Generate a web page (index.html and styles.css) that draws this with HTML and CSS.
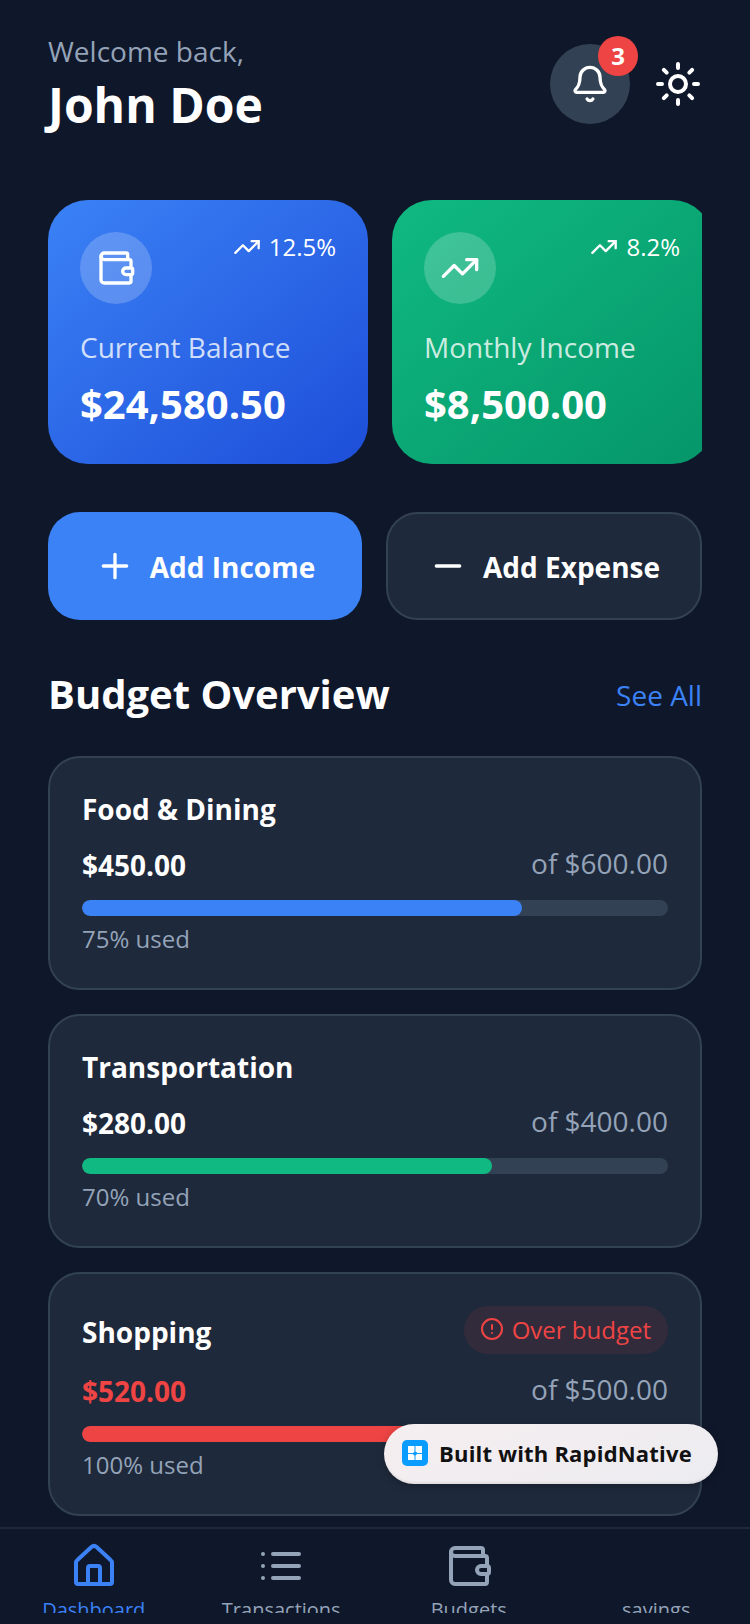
FILE: index.html
```html
<!DOCTYPE html>
<html lang="en">
<head>
    <meta charset="UTF-8">
    <meta name="viewport" content="width=device-width, initial-scale=1.0">
    <title>Dashboard</title>
    <link rel="stylesheet" href="styles.css">
</head>
<body>
    <div class="app">
        <div class="content">
            <div class="header">
                <div>
                    <div class="welcome">Welcome back,</div>
                    <div class="name">John Doe</div>
                </div>
                <div class="header-actions">
                    <div class="bell">
                        <svg class="icon-40" viewBox="0 0 24 24"><path d="M10.268 21a2 2 0 0 0 3.464 0"/><path d="M3.262 15.326A1 1 0 0 0 4 17h16a1 1 0 0 0 .74-1.673C19.41 13.956 18 12.499 18 8A6 6 0 0 0 6 8c0 4.499-1.411 5.956-2.738 7.326"/></svg>
                        <span class="bell-count">3</span>
                    </div>
                    <svg class="icon-48" viewBox="0 0 24 24"><circle cx="12" cy="12" r="4"/><path d="M12 2v2M12 20v2M4.93 4.93l1.41 1.41M17.66 17.66l1.41 1.41M2 12h2M20 12h2M6.34 17.66l-1.41 1.41M19.07 4.93l-1.41 1.41"/></svg>
                </div>
            </div>

            <div class="cards">
                <div class="summary-card blue">
                    <div class="summary-top">
                        <div class="summary-icon">
                            <svg class="icon-40" viewBox="0 0 24 24"><path d="M19 7V4a1 1 0 0 0-1-1H5a2 2 0 0 0 0 4h15a1 1 0 0 1 1 1v4h-3a2 2 0 0 0 0 4h3a1 1 0 0 0 1-1v-2a1 1 0 0 0-1-1"/><path d="M3 5v14a2 2 0 0 0 2 2h15a1 1 0 0 0 1-1v-4"/></svg>
                        </div>
                        <div class="trend">
                            <svg class="icon-28" viewBox="0 0 24 24"><path d="M22 7l-8.5 8.5-5-5L2 17"/><path d="M16 7h6v6"/></svg>
                            <span>12.5%</span>
                        </div>
                    </div>
                    <div class="summary-label">Current Balance</div>
                    <div class="summary-value">$24,580.50</div>
                </div>
                <div class="summary-card green">
                    <div class="summary-top">
                        <div class="summary-icon">
                            <svg class="icon-40" viewBox="0 0 24 24"><path d="M22 7l-8.5 8.5-5-5L2 17"/><path d="M16 7h6v6"/></svg>
                        </div>
                        <div class="trend">
                            <svg class="icon-28" viewBox="0 0 24 24"><path d="M22 7l-8.5 8.5-5-5L2 17"/><path d="M16 7h6v6"/></svg>
                            <span>8.2%</span>
                        </div>
                    </div>
                    <div class="summary-label">Monthly Income</div>
                    <div class="summary-value">$8,500.00</div>
                </div>
            </div>

            <div class="actions">
                <div class="action primary">
                    <svg class="icon-40" viewBox="0 0 24 24"><path d="M5 12h14M12 5v14"/></svg>
                    <span class="action-text">Add Income</span>
                </div>
                <div class="action secondary">
                    <svg class="icon-40" viewBox="0 0 24 24"><path d="M5 12h14"/></svg>
                    <span class="action-text">Add Expense</span>
                </div>
            </div>

            <div class="section-head">
                <div class="section-title">Budget Overview</div>
                <div class="see-all">See All</div>
            </div>

            <div class="budget">
                <div class="budget-head"><div class="budget-name">Food &amp; Dining</div></div>
                <div class="budget-row">
                    <div class="spent">$450.00</div>
                    <div class="limit">of $600.00</div>
                </div>
                <div class="track"><div class="fill fill-blue" style="width: 75%"></div></div>
                <div class="used">75% used</div>
            </div>

            <div class="budget">
                <div class="budget-head"><div class="budget-name">Transportation</div></div>
                <div class="budget-row">
                    <div class="spent">$280.00</div>
                    <div class="limit">of $400.00</div>
                </div>
                <div class="track"><div class="fill fill-green" style="width: 70%"></div></div>
                <div class="used">70% used</div>
            </div>

            <div class="budget">
                <div class="budget-head with-badge">
                    <div class="budget-name">Shopping</div>
                    <div class="over">
                        <svg class="icon-24" viewBox="0 0 24 24"><circle cx="12" cy="12" r="10"/><path d="M12 8v4M12 16h.01"/></svg>
                        <span>Over budget</span>
                    </div>
                </div>
                <div class="budget-row">
                    <div class="spent red">$520.00</div>
                    <div class="limit">of $500.00</div>
                </div>
                <div class="track"><div class="fill fill-red" style="width: 100%"></div></div>
                <div class="used">100% used</div>
            </div>
        </div>

        <div class="nav">
            <div class="tab active">
                <svg class="icon-48" viewBox="0 0 24 24"><path d="M3 10.5a2 2 0 0 1 .7-1.5l7-6.5a2 2 0 0 1 2.6 0l7 6.5a2 2 0 0 1 .7 1.5V20a1 1 0 0 1-1 1H4a1 1 0 0 1-1-1Z"/><path d="M9 21v-8a1 1 0 0 1 1-1h4a1 1 0 0 1 1 1v8"/></svg>
                <span class="tab-label">Dashboard</span>
            </div>
            <div class="tab">
                <svg class="icon-48" viewBox="0 0 24 24"><path d="M8 6h13M8 12h13M8 18h13M3 6h.01M3 12h.01M3 18h.01"/></svg>
                <span class="tab-label">Transactions</span>
            </div>
            <div class="tab">
                <svg class="icon-48" viewBox="0 0 24 24"><path d="M19 7V4a1 1 0 0 0-1-1H5a2 2 0 0 0 0 4h15a1 1 0 0 1 1 1v4h-3a2 2 0 0 0 0 4h3a1 1 0 0 0 1-1v-2a1 1 0 0 0-1-1"/><path d="M3 5v14a2 2 0 0 0 2 2h15a1 1 0 0 0 1-1v-4"/></svg>
                <span class="tab-label">Budgets</span>
            </div>
            <div class="tab">
                <div class="tab-blank"></div>
                <span class="tab-label">savings</span>
            </div>
        </div>

        <div class="built">
            <div class="built-logo">
                <svg viewBox="0 0 26 26"><path class="logo-mark" d="M6 6h6.5v5.5L11 13H6ZM13.5 6H20v7h-4.5l-2-1.5ZM6 14h4.5l2 1.5V20H6ZM15 14h5v6h-6.5v-4.5Z"/></svg>
            </div>
            <span>Built with RapidNative</span>
        </div>
    </div>
</body>
</html>
```

FILE: styles.css
```css
* {
    box-sizing: border-box;
}
html, body {
    margin: 0;
    padding: 0;
}
body {
    font-family: "Open Sans", Arial, sans-serif;
    background: #0f172a;
    color: #fff;
}
svg {
    fill: none;
    stroke: currentColor;
    stroke-width: 2;
    stroke-linecap: round;
    stroke-linejoin: round;
    flex-shrink: 0;
}
.icon-24 { width: 24px; height: 24px; }
.icon-28 { width: 28px; height: 28px; }
.icon-40 { width: 40px; height: 40px; }
.icon-48 { width: 48px; height: 48px; }

.app {
    position: relative;
    width: 750px;
    height: 1624px;
    overflow: hidden;
    display: flex;
    flex-direction: column;
}
.content {
    flex: 1;
    min-height: 0;
    overflow: hidden;
    padding: 31px 48px 0;
}

.header {
    display: flex;
    justify-content: space-between;
    align-items: flex-start;
    height: 169px;
}
.welcome {
    font-size: 28px;
    line-height: 40px;
    color: #94a3b8;
}
.name {
    font-size: 48px;
    line-height: 64px;
    font-weight: 700;
    margin-top: 2px;
}
.header-actions {
    display: flex;
    align-items: center;
    gap: 24px;
    margin-top: 13px;
}
.bell {
    position: relative;
    width: 80px;
    height: 80px;
    border-radius: 50%;
    background: #334155;
    display: flex;
    align-items: center;
    justify-content: center;
}
.bell-count {
    position: absolute;
    top: -8px;
    right: -8px;
    width: 40px;
    height: 40px;
    border-radius: 50%;
    background: #ef4444;
    font-size: 24px;
    font-weight: 700;
    line-height: 40px;
    text-align: center;
}

.cards {
    display: flex;
    gap: 24px;
    overflow: hidden;
    margin-bottom: 48px;
}
.summary-card {
    flex: 0 0 320px;
    height: 264px;
    border-radius: 40px;
    padding: 32px;
}
.summary-card.blue {
    background: linear-gradient(to bottom right, #3b82f6, #1d4ed8);
}
.summary-card.green {
    background: linear-gradient(to bottom right, #10b981, #059669);
}
.summary-top {
    display: flex;
    justify-content: space-between;
    align-items: flex-start;
    height: 72px;
    margin-bottom: 23px;
}
.summary-icon {
    width: 72px;
    height: 72px;
    border-radius: 50%;
    background: rgba(255,255,255,0.2);
    display: flex;
    align-items: center;
    justify-content: center;
}
.trend {
    display: flex;
    align-items: center;
    gap: 8px;
    font-size: 24px;
    line-height: 32px;
    margin-top: -1px;
}
.summary-label {
    font-size: 28px;
    line-height: 40px;
    color: rgba(255,255,255,0.8);
}
.summary-value {
    font-size: 40px;
    line-height: 56px;
    font-weight: 700;
    margin-top: 9px;
}

.actions {
    display: flex;
    gap: 24px;
    margin-bottom: 46px;
}
.action {
    height: 108px;
    border-radius: 32px;
    display: flex;
    align-items: center;
    justify-content: center;
    gap: 15px;
    font-size: 28px;
    font-weight: 700;
}
.action.primary {
    flex: 0 0 314px;
    background: #3b82f6;
}
.action.secondary {
    flex: 1;
    background: #1e293b;
    border: 2px solid #334155;
}
.action-text {
    padding-top: 2px;
}

.section-head {
    display: flex;
    justify-content: space-between;
    align-items: center;
    margin-bottom: 34px;
}
.section-title {
    font-size: 40px;
    line-height: 56px;
    font-weight: 700;
}
.see-all {
    font-size: 28px;
    color: #3b82f6;
    margin-top: 2px;
}

.budget {
    background: #1e293b;
    border: 2px solid #334155;
    border-radius: 32px;
    padding: 31px 32px 33px;
    margin-bottom: 24px;
}
.budget-head {
    display: flex;
    justify-content: space-between;
    align-items: flex-start;
    margin-bottom: 16px;
}
.budget-head.with-badge {
    margin-bottom: 17px;
}
.with-badge .budget-name {
    margin-top: 7px;
}
.budget-name {
    font-size: 28px;
    line-height: 40px;
    font-weight: 700;
}
.budget-row {
    display: flex;
    justify-content: space-between;
    align-items: flex-start;
    margin-bottom: 15px;
}
.spent {
    font-size: 28px;
    line-height: 40px;
    font-weight: 700;
}
.spent.red {
    color: #ef4444;
}
.limit {
    font-size: 28px;
    line-height: 36px;
    color: #94a3b8;
}
.track {
    height: 16px;
    border-radius: 8px;
    background: #334155;
    overflow: hidden;
}
.fill {
    height: 100%;
    border-radius: 8px;
}
.fill-blue { background: #3b82f6; }
.fill-green { background: #10b981; }
.fill-red { background: #ef4444; }
.used {
    font-size: 24px;
    line-height: 32px;
    color: #94a3b8;
    margin-top: 7px;
}
.over {
    display: flex;
    align-items: center;
    gap: 8px;
    height: 48px;
    margin-top: 1px;
    padding: 0 17px 2px 16px;
    border-radius: 24px;
    background: rgba(239,68,68,0.1);
    color: #ef4444;
    font-size: 24px;
}

.nav {
    flex: 0 0 97px;
    border-top: 2px solid #1e293b;
    display: flex;
    align-items: flex-start;
    background: #0f172a;
}
.tab {
    flex: 1;
    height: 84px;
    overflow: hidden;
    display: flex;
    flex-direction: column;
    align-items: center;
    padding-top: 13px;
    color: #94a3b8;
}
.tab.active {
    color: #3b82f6;
}
.tab-blank {
    flex: 0 0 48px;
}
.tab-label {
    flex-shrink: 0;
    font-size: 20px;
    line-height: 28px;
    margin-top: 6px;
}

.built {
    position: absolute;
    left: 384px;
    top: 1424px;
    width: 334px;
    height: 60px;
    padding: 0 0 2px 18px;
    border-radius: 30px;
    background: linear-gradient(160deg, #f6eef0, #ececf0);
    box-shadow: 0 2px 8px rgba(0,0,0,0.25), inset 0 -2px 2px rgba(0,0,0,0.06);
    display: flex;
    align-items: center;
    gap: 11px;
    color: #111;
    font-size: 22px;
    font-weight: 700;
    letter-spacing: 0.2px;
}
.built-logo {
    width: 26px;
    height: 26px;
    border-radius: 5px;
    background: #0a9dff;
}
.built-logo svg {
    display: block;
    width: 26px;
    height: 26px;
}
.logo-mark {
    fill: #fff;
    stroke: none;
}
```
